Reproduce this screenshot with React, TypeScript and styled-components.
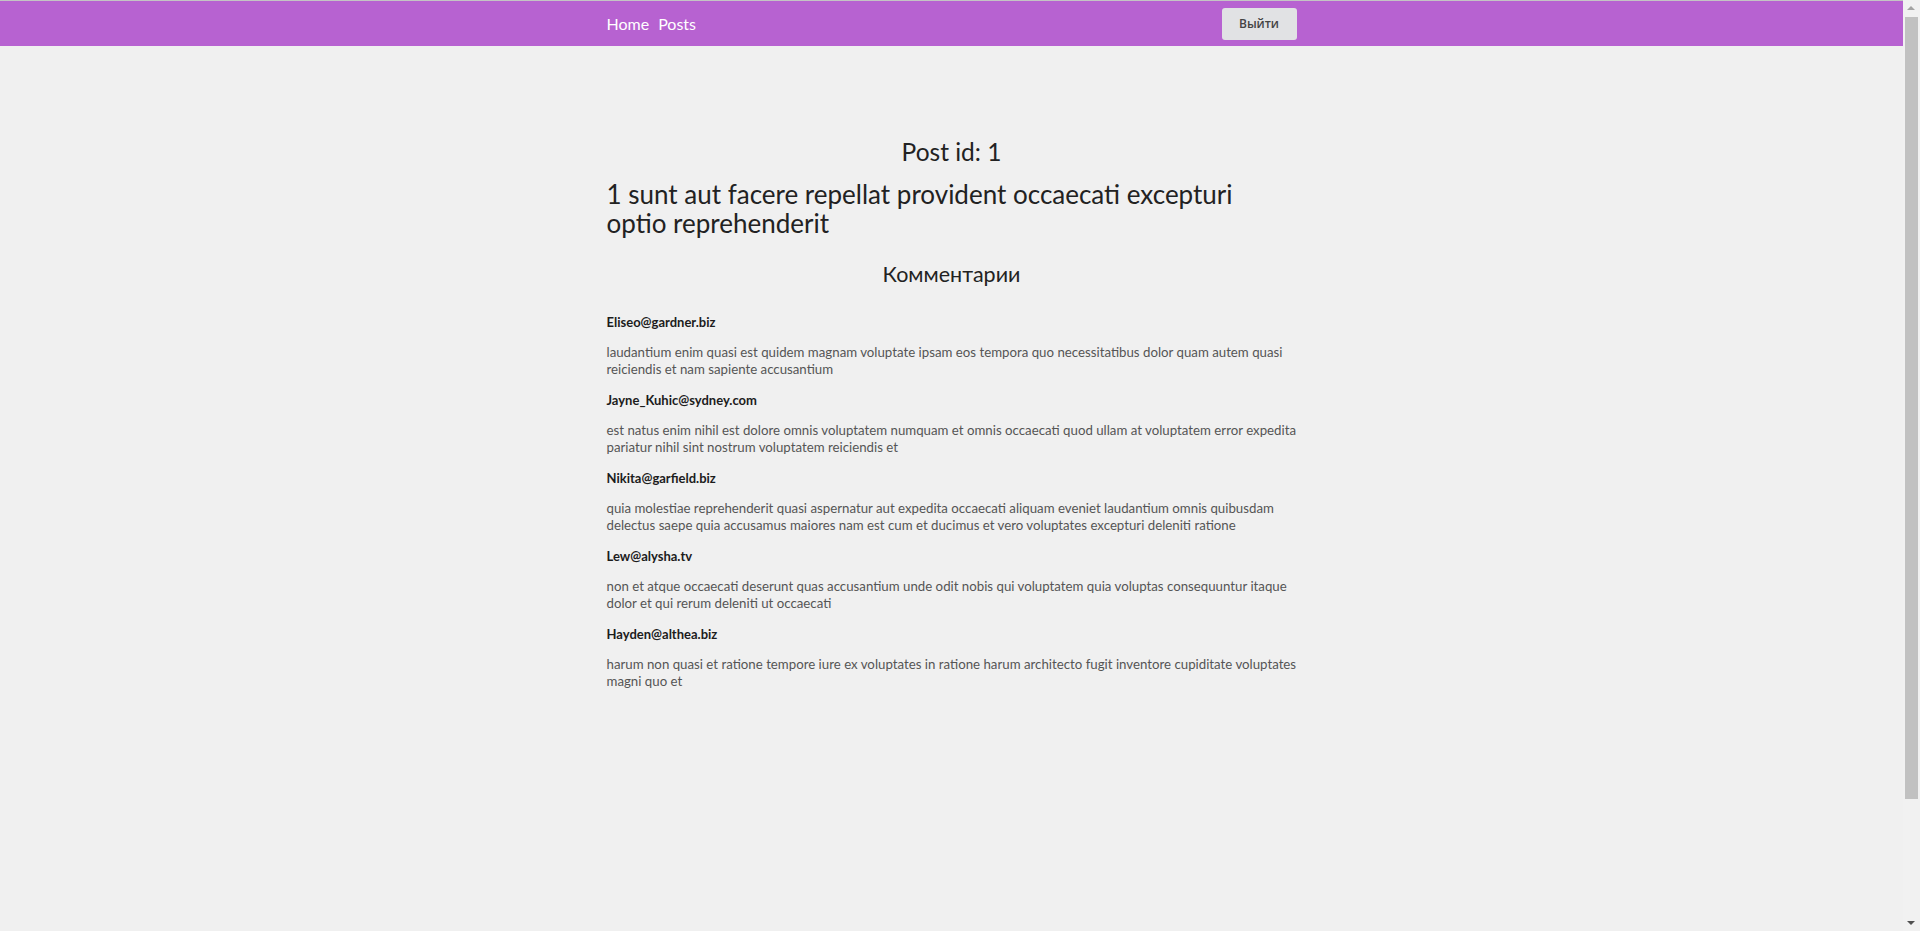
import styled, { createGlobalStyle } from "styled-components";

const GlobalStyle = createGlobalStyle`
  * {
    box-sizing: border-box;
  }
  html {
    border-top: 1px solid #c4c4c4;
  }
  body {
    margin: 0;
    background-color: #f0f0f0;
    font-family: "Lato", "Noto Sans", sans-serif;
    color: #222222;
  }
`;

const Page = styled.div`
  min-height: 1066px;
  margin-right: 17px;
`;

/* the window's scrollbar, drawn over the right edge */
const ScrollTrack = styled.div`
  position: fixed;
  top: 0;
  right: 0;
  bottom: 0;
  width: 17px;
  background-color: #f1f1f1;
`;

const ScrollThumb = styled.div`
  position: absolute;
  top: 17px;
  left: 2px;
  width: 13px;
  height: 782px;
  background-color: #c1c1c1;
`;

const ScrollArrow = styled.div<{ $down?: boolean }>`
  position: absolute;
  left: 4px;
  width: 0;
  height: 0;
  border-left: 4.5px solid transparent;
  border-right: 4.5px solid transparent;
  ${(p) =>
    p.$down
      ? `bottom: 6px; border-top: 4px solid #505050;`
      : `top: 6px; border-bottom: 4px solid #a3a3a3;`}
`;

const Navbar = styled.nav`
  height: 45px;
  background-color: #b762d1;
`;

const NavInner = styled.div`
  max-width: 690px;
  height: 100%;
  margin: 0 auto;
  display: flex;
  align-items: center;
  justify-content: space-between;
`;

const NavLinks = styled.div`
  display: flex;
  gap: 9px;
`;

const NavLink = styled.a`
  font-family: "Lato", sans-serif;
  font-size: 16px;
  color: #ffffff;
  text-decoration: none;
  cursor: pointer;
`;

const LogoutButton = styled.button`
  width: 75px;
  height: 32px;
  border: none;
  border-radius: 3px;
  background-color: #e1e2e4;
  color: #444444;
  font-family: "Open Sans", sans-serif;
  font-size: 12px;
  font-weight: 600;
  cursor: pointer;
`;

const Container = styled.main`
  max-width: 690px;
  margin: 0 auto;
  padding-top: 88px;
`;

const PostId = styled.h2`
  margin: 0;
  font-size: 24.5px;
  font-weight: 400;
  line-height: 36px;
  text-align: center;
  color: #222222;
`;

const PostTitle = styled.h1`
  margin: 10px 0 0;
  font-size: 26px;
  font-weight: 400;
  line-height: 29px;
  color: #222222;
`;

const SectionTitle = styled.h3`
  margin: 21px 0 0;
  font-size: 21.5px;
  font-weight: 400;
  line-height: 30px;
  text-align: center;
  color: #222222;
`;

const CommentList = styled.section`
  margin-top: 25px;
`;

const Email = styled.h5`
  margin: 0;
  font-size: 13px;
  font-weight: 700;
  line-height: 16px;
  color: #1c1c1c;
`;

const Body = styled.p`
  margin: 14px 0;
  font-size: 13.25px;
  line-height: 17px;
  color: #555555;
`;

const comments = [
  {
    id: 1,
    email: "Eliseo@gardner.biz",
    body: "laudantium enim quasi est quidem magnam voluptate ipsam eos tempora quo necessitatibus dolor quam autem quasi reiciendis et nam sapiente accusantium",
  },
  {
    id: 2,
    email: "Jayne_Kuhic@sydney.com",
    body: "est natus enim nihil est dolore omnis voluptatem numquam et omnis occaecati quod ullam at voluptatem error expedita pariatur nihil sint nostrum voluptatem reiciendis et",
  },
  {
    id: 3,
    email: "Nikita@garfield.biz",
    body: "quia molestiae reprehenderit quasi aspernatur aut expedita occaecati aliquam eveniet laudantium omnis quibusdam delectus saepe quia accusamus maiores nam est cum et ducimus et vero voluptates excepturi deleniti ratione",
  },
  {
    id: 4,
    email: "Lew@alysha.tv",
    body: "non et atque occaecati deserunt quas accusantium unde odit nobis qui voluptatem quia voluptas consequuntur itaque dolor et qui rerum deleniti ut occaecati",
  },
  {
    id: 5,
    email: "Hayden@althea.biz",
    body: "harum non quasi et ratione tempore iure ex voluptates in ratione harum architecto fugit inventore cupiditate voluptates magni quo et",
  },
];

export default function App() {
  return (
    <>
      <GlobalStyle />
      <Page>
        <Navbar>
          <NavInner>
            <NavLinks>
              <NavLink>Home</NavLink>
              <NavLink>Posts</NavLink>
            </NavLinks>
            <LogoutButton>Выйти</LogoutButton>
          </NavInner>
        </Navbar>
        <Container>
          <PostId>Post id: 1</PostId>
          <PostTitle>
            1 sunt aut facere repellat provident occaecati excepturi optio
            reprehenderit
          </PostTitle>
          <SectionTitle>Комментарии</SectionTitle>
          <CommentList>
            {comments.map((c) => (
              <div key={c.id}>
                <Email>{c.email}</Email>
                <Body>{c.body}</Body>
              </div>
            ))}
          </CommentList>
        </Container>
      </Page>
      <ScrollTrack>
        <ScrollArrow />
        <ScrollThumb />
        <ScrollArrow $down />
      </ScrollTrack>
    </>
  );
}
